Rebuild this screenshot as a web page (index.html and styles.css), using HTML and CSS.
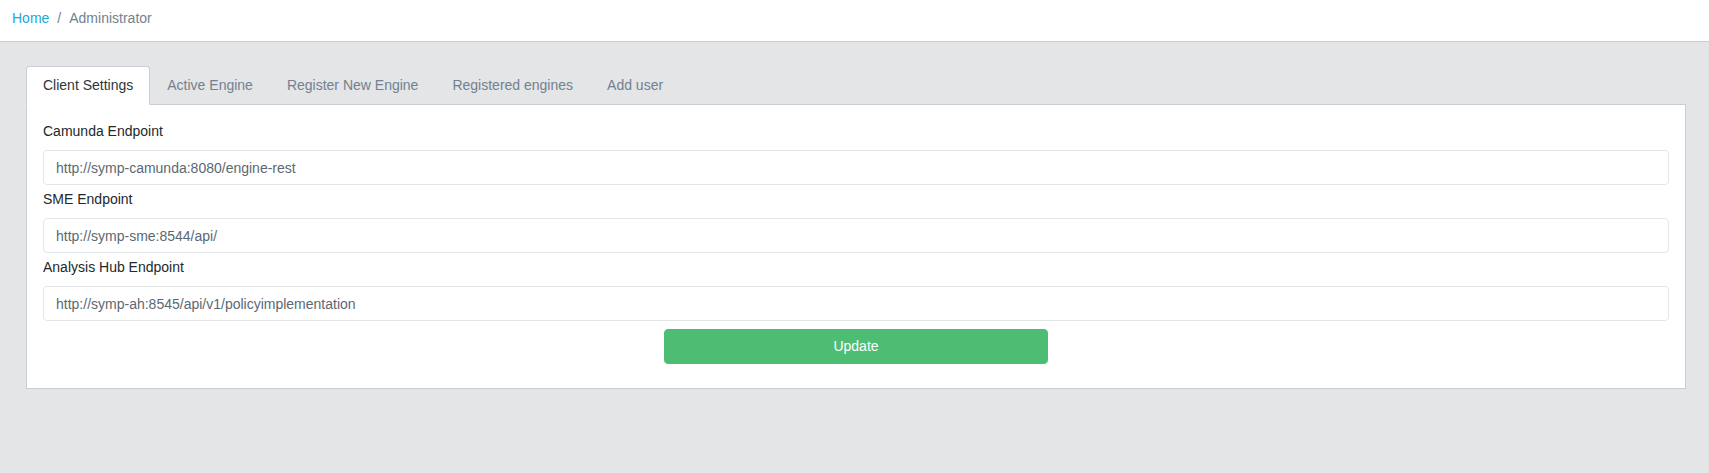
FILE: index.html
```html
<!DOCTYPE html>
<html lang="en">
<head>
<meta charset="utf-8">
<title>Administrator</title>
<link rel="stylesheet" href="styles.css">
</head>
<body>
  <nav class="breadcrumb">
    <a class="breadcrumb-link" href="#">Home</a>
    <span class="breadcrumb-sep">/</span>
    <span class="breadcrumb-active">Administrator</span>
  </nav>
  <main class="main">
    <ul class="tabs">
      <li class="tab tab-active">Client Settings</li>
      <li class="tab">Active Engine</li>
      <li class="tab">Register New Engine</li>
      <li class="tab">Registered engines</li>
      <li class="tab">Add user</li>
    </ul>
    <section class="panel">
      <label class="field-label">Camunda Endpoint</label>
      <input class="field-input" type="text" value="http://symp-camunda:8080/engine-rest">
      <label class="field-label">SME Endpoint</label>
      <input class="field-input" type="text" value="http://symp-sme:8544/api/">
      <label class="field-label">Analysis Hub Endpoint</label>
      <input class="field-input" type="text" value="http://symp-ah:8545/api/v1/policyimplementation">
      <div class="actions">
        <button class="btn-update" type="button">Update</button>
      </div>
    </section>
  </main>
</body>
</html>
```

FILE: styles.css
```css
* {
  box-sizing: border-box;
}

html, body {
  margin: 0;
  padding: 0;
}

body {
  background: #e4e5e6;
  font-family: "Liberation Sans", Arial, sans-serif;
  font-size: 14px;
  line-height: 21px;
  color: #23282c;
  height: 473px;
}

.breadcrumb {
  display: flex;
  align-items: flex-start;
  background: #fff;
  border-bottom: 1px solid #c8ced3;
  height: 42px;
  padding: 8px 12px 12px 12px;
}

.breadcrumb-link {
  color: #20a8d8;
  text-decoration: none;
}

.breadcrumb-sep {
  color: #73818f;
  padding: 0 8px;
}

.breadcrumb-active {
  color: #73818f;
}

.main {
  padding: 24px 23px 0 26px;
}

.tabs {
  display: flex;
  list-style: none;
  margin: 0;
  padding: 0;
}

.tab {
  padding: 8px 16px;
  border: 1px solid transparent;
  border-top-left-radius: 4px;
  border-top-right-radius: 4px;
  color: #73818f;
  margin-bottom: -1px;
  position: relative;
  z-index: 1;
}

.tab-active {
  background: #fff;
  border-color: #c8ced3 #c8ced3 #fff;
  color: #2f353a;
}

.panel {
  background: #fff;
  border: 1px solid #c8ced3;
  padding: 16px;
  display: flex;
  flex-direction: column;
}

.field-label {
  display: block;
  margin-bottom: 8px;
  color: #23282c;
}

.field-input + .field-label {
  margin-top: 4px;
}

.field-input {
  display: block;
  width: 100%;
  height: 35px;
  padding: 6px 12px;
  font-family: "Liberation Sans", Arial, sans-serif;
  font-size: 14px;
  line-height: 21px;
  color: #5c6873;
  background: #fff;
  border: 1px solid #e4e7ea;
  border-radius: 4px;
  outline: none;
}

.actions {
  display: flex;
  justify-content: center;
  margin-top: 8px;
  margin-bottom: 8px;
}

.btn-update {
  width: 384px;
  height: 35px;
  background: #4dbd74;
  border: 1px solid #4dbd74;
  border-radius: 4px;
  color: #fff;
  font-family: "Liberation Sans", Arial, sans-serif;
  font-size: 14px;
  line-height: 21px;
  padding: 6px 12px;
}
```
